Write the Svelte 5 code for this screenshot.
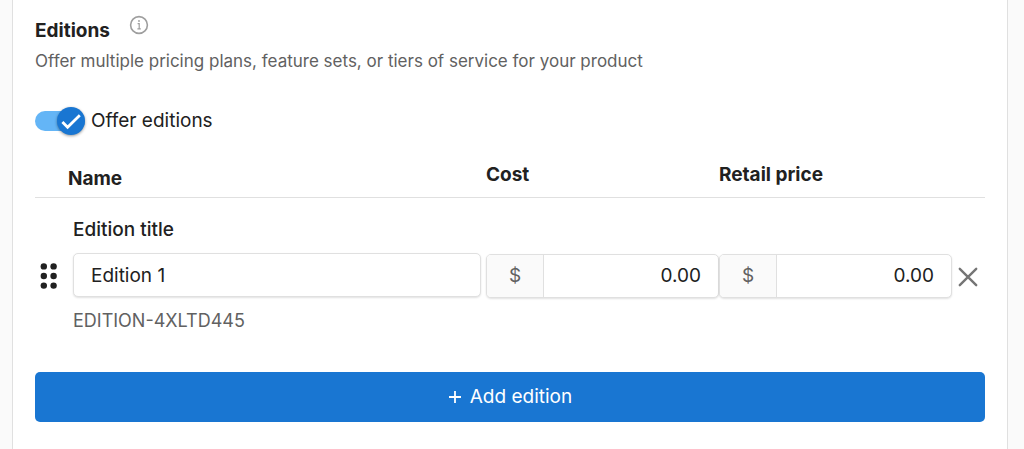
<script lang="ts">
	let offerEditions = $state(true);
	let nextId = 2;
	let editions = $state([
		{ id: 1, title: 'Edition 1', sku: 'EDITION-4XLTD445', cost: '0.00', retail: '0.00' }
	]);

	function addEdition() {
		const suffix = Math.random().toString(36).slice(2, 10).toUpperCase();
		editions.push({
			id: nextId,
			title: `Edition ${nextId}`,
			sku: `EDITION-${suffix}`,
			cost: '0.00',
			retail: '0.00'
		});
		nextId += 1;
	}

	function removeEdition(id: number) {
		editions = editions.filter((edition) => edition.id !== id);
	}
</script>

{#snippet price(id: string, label: string, edition: any, key: string)}
	<div class="price">
		<label for={id} class="currency" aria-label={label}>$</label>
		<input {id} class="price-input" type="text" inputmode="decimal" bind:value={edition[key]} />
	</div>
{/snippet}

<div class="page">
	<section class="card">
		<header class="heading">
			<h2 class="title">Editions</h2>
			<button type="button" class="icon-btn info" aria-label="About editions">
				<svg width="20" height="20" viewBox="0 0 20 20" fill="none" stroke="currentColor">
					<circle cx="10" cy="10" r="8.4" stroke-width="1.6" />
					<path d="M8.6 8.6h1.6v5M8.4 13.8h3.4" stroke-width="1.2" />
					<circle cx="10" cy="6" r="0.9" fill="currentColor" stroke="none" />
				</svg>
			</button>
		</header>
		<p class="desc">Offer multiple pricing plans, feature sets, or tiers of service for your product</p>

		<label class="toggle">
			<input type="checkbox" class="toggle-input" bind:checked={offerEditions} />
			<span class="track">
				<span class="thumb">
					<svg width="28" height="28" viewBox="0 0 28 28" fill="none" stroke="#fff" stroke-width="2.8">
						<path d="M5.4 15l5.2 5.2L22.8 8.2" />
					</svg>
				</span>
			</span>
			Offer editions
		</label>

		{#if offerEditions}
			<table class="editions">
				<thead>
					<tr>
						<th class="col-icon"></th>
						<th class="col-name">Name</th>
						<th class="col-price">Cost</th>
						<th class="col-price">Retail price</th>
						<th class="col-icon"></th>
					</tr>
				</thead>
				<tbody>
					{#each editions as edition (edition.id)}
						<tr>
							<td>
								<button type="button" class="icon-btn drag" aria-label="Reorder edition">
									<svg width="18" height="28" viewBox="0 0 18 28" fill="currentColor">
										<circle cx="3.8" cy="4.4" r="3.2" />
										<circle cx="13.6" cy="4.4" r="3.2" />
										<circle cx="3.8" cy="14" r="3.2" />
										<circle cx="13.6" cy="14" r="3.2" />
										<circle cx="3.8" cy="23.6" r="3.2" />
										<circle cx="13.6" cy="23.6" r="3.2" />
									</svg>
								</button>
							</td>
							<td class="name-cell">
								<label for="title-{edition.id}" class="field-label">Edition title</label>
								<input id="title-{edition.id}" class="title-input" type="text" bind:value={edition.title} />
								<span class="sku">{edition.sku}</span>
							</td>
							<td>{@render price(`cost-${edition.id}`, 'Cost', edition, 'cost')}</td>
							<td>{@render price(`retail-${edition.id}`, 'Retail price', edition, 'retail')}</td>
							<td>
								<button
									type="button"
									class="icon-btn remove"
									aria-label="Remove edition"
									onclick={() => removeEdition(edition.id)}
								>
									<svg width="20" height="20" viewBox="0 0 20 20" fill="none" stroke="currentColor" stroke-width="2.4" stroke-linecap="round">
										<path d="M1.8 1.8l16.4 16.4M18.2 1.8L1.8 18.2" />
									</svg>
								</button>
							</td>
						</tr>
					{/each}
				</tbody>
			</table>

			<button type="button" class="add-btn" onclick={addEdition}>
				<svg width="14" height="14" viewBox="0 0 14 14" stroke="currentColor" stroke-width="1.8">
					<path d="M7 1v12M1 7h12" />
				</svg>
				Add edition
			</button>
		{/if}
	</section>
</div>

<style>
	:global(body) {
		background: #fafafa;
	}
	.page {
		min-height: 100vh;
		box-sizing: border-box;
		padding: 0 16px 0 12px;
		display: flex;
		font-family: Inter, 'Liberation Sans', sans-serif;
		font-size: 19px;
		line-height: 24px;
		color: #212121;
	}
	.card {
		flex: 1;
		min-width: 0;
		padding: 15px 22px 24px;
		background: #fff;
		border: solid #e0e0e0;
		border-width: 0 1px;
	}
	.heading {
		display: flex;
		align-items: flex-start;
		gap: 19px;
	}
	.title {
		margin: 0;
		padding-top: 4px;
		font-size: 19px;
		font-weight: 700;
	}
	.icon-btn {
		display: flex;
		padding: 0;
		border: 0;
		background: none;
		color: inherit;
		cursor: pointer;
	}
	.info {
		color: #9e9e9e;
	}
	.desc {
		margin: 6px 0 0;
		font-size: 17px;
		color: #616161;
	}
	.toggle {
		display: flex;
		align-items: center;
		gap: 6px;
		margin-top: 34px;
		width: fit-content;
		cursor: pointer;
		position: relative;
		line-height: 28px;
	}
	.toggle-input {
		position: absolute;
		opacity: 0;
		margin: 0;
	}
	.track {
		display: flex;
		align-items: center;
		width: 50px;
		height: 20px;
		border-radius: 10px;
		background: #bdbdbd;
	}
	.thumb {
		display: flex;
		border-radius: 50%;
		background: #757575;
		box-shadow: 0 1px 3px rgba(0, 0, 0, 0.4);
	}
	.toggle-input:checked + .track {
		justify-content: flex-end;
		background: #64b5f6;
	}
	.toggle-input:checked + .track .thumb {
		background: #1976d2;
	}
	.toggle-input:focus-visible + .track {
		outline: 2px solid #1976d2;
		outline-offset: 6px;
	}
	.editions {
		width: 100%;
		margin-top: 24px;
		border-collapse: collapse;
		table-layout: fixed;
	}
	th {
		padding: 4px 0 6px;
		text-align: left;
		vertical-align: top;
		font-weight: 700;
		border-bottom: 1px solid #e0e0e0;
	}
	td {
		padding: 0;
		vertical-align: middle;
	}
	.col-icon {
		width: 33px;
	}
	.col-name {
		padding: 8px 0 6px;
	}
	.col-price {
		width: 233px;
	}
	.name-cell {
		padding: 20px 5px;
	}
	.field-label {
		display: block;
		margin-bottom: 11px;
		font-weight: 500;
	}
	.title-input,
	.price {
		box-sizing: border-box;
		width: 100%;
		height: 44px;
		border: 1px solid #e0e0e0;
		border-radius: 5px;
		background: #fff;
		box-shadow: 0 1px 2px rgba(0, 0, 0, 0.12);
	}
	.title-input {
		display: block;
		padding: 0 17px;
		font: inherit;
		color: inherit;
	}
	.sku {
		display: block;
		margin-top: 12px;
		font-size: 18px;
		color: #616161;
	}
	.price {
		display: flex;
		overflow: hidden;
	}
	.currency {
		display: flex;
		align-items: center;
		justify-content: center;
		width: 56px;
		flex: none;
		color: #616161;
		background: #fafafa;
		border-right: 1px solid #e0e0e0;
	}
	.price-input {
		flex: 1;
		min-width: 0;
		padding: 0 17px;
		border: 0;
		font: inherit;
		color: inherit;
		text-align: right;
		background: none;
	}
	.drag {
		padding-left: 5px;
		cursor: grab;
	}
	.remove {
		padding: 3px 0 0 6px;
		color: #757575;
	}
	.add-btn {
		display: flex;
		align-items: center;
		justify-content: center;
		gap: 8px;
		width: 100%;
		height: 50px;
		margin-top: 19px;
		border: 0;
		border-radius: 5px;
		background: #1976d2;
		color: #fff;
		font: inherit;
		cursor: pointer;
	}
</style>
